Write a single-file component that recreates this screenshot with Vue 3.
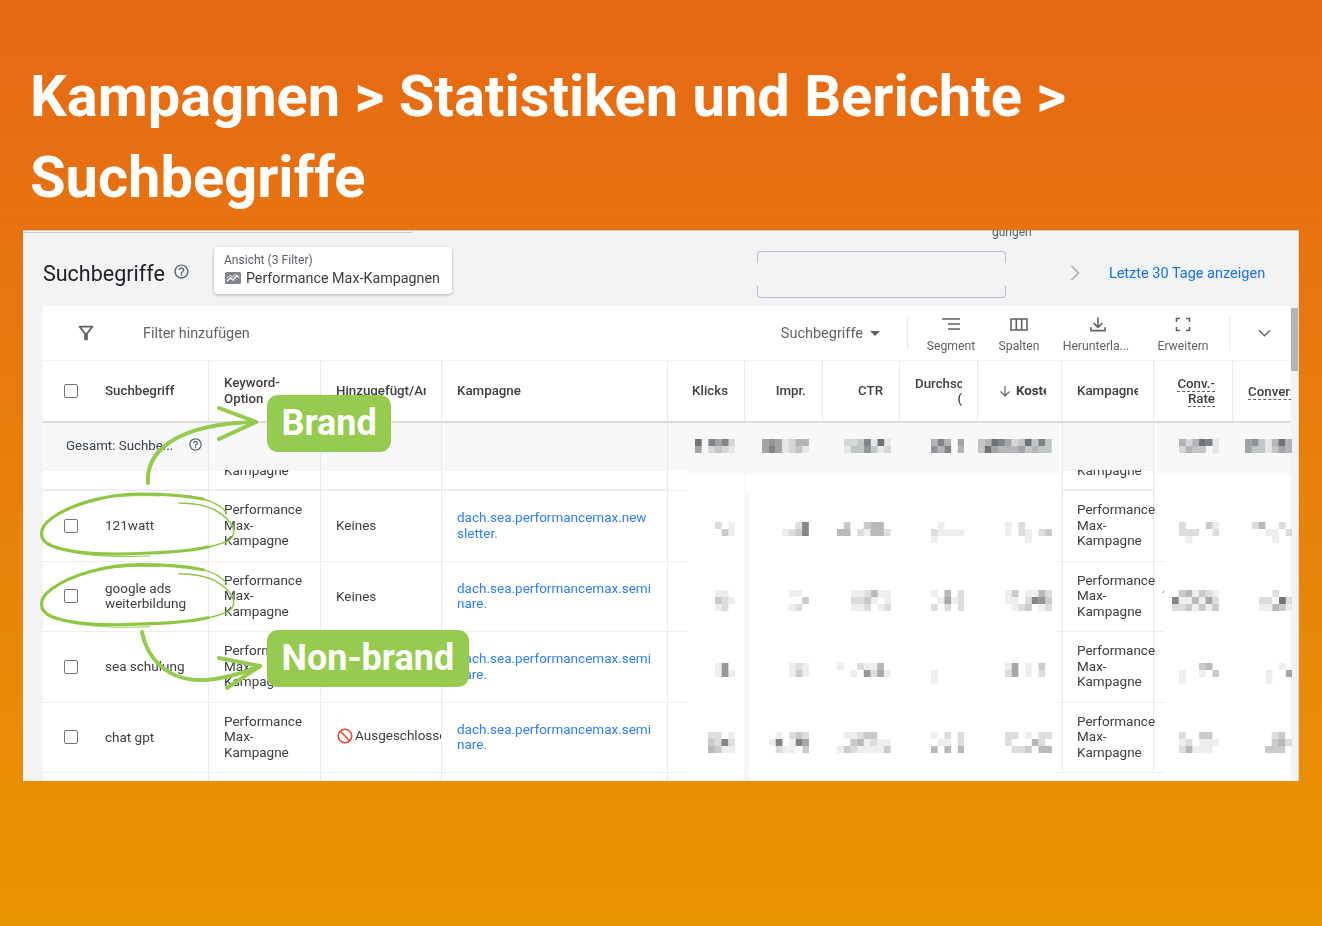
<script setup>
const helpPath = 'M11 18h2v-2h-2v2zm1-16C6.48 2 2 6.48 2 12s4.48 10 10 10 10-4.48 10-10S17.52 2 12 2zm0 18c-4.41 0-8-3.59-8-8s3.59-8 8-8 8 3.59 8 8-3.59 8-8 8zm0-14c-2.21 0-4 1.79-4 4h2c0-1.1.9-2 2-2s2 .9 2 2c0 2-3 1.75-3 5h2c0-2.25 3-2.5 3-5 0-2.21-1.79-4-4-4z'

// right offset of the blurred numbers in each metric column
const pads = [10, 14, 9, 14, 10, 14, -1]
const BLOCK = 6.7

const totals = [
  ['807572', '502321'],
  ['5651244', '5751231'],
  ['2237181', '1336312'],
  ['47405', '64704'],
  ['34875238373', '38544453433'],
  ['424871', '243301'],
  ['5631484', '5331354'],
]

const rows = [
  {
    term: '121watt', added: 'Keines', link: 'dach.sea.performancemax.newsletter.', top: 31,
    cells: [
      ['201', '031', '000'],
      ['0027', '1237', '0000'],
      ['03003440', '44021442', '00000000'],
      ['01000', '21111', '10000'],
      ['1020000', '1021023', '0001000'],
      ['200031', '222002', '010000'],
      ['240020', '001102', '000100'],
    ],
  },
  {
    term: 'google ads weiterbildung', added: 'Keines', link: 'dach.sea.performancemax.seminare.', top: 28,
    cells: [
      ['110', '321', '120'],
      ['0110', '0003', '0120'],
      ['112411', '223101', '112012'],
      ['10402', '01512', '20202'],
      ['1301142', '1102763', '0123012'],
      ['0341321', '7114152', '2231313'],
      ['00200', '22082', '11431'],
    ],
  },
  {
    term: 'sea schulung', added: 'Keines', link: 'dach.sea.performancemax.seminare.', top: 31,
    cells: [
      ['160', '161', '000'],
      ['121', '131', '000'],
      ['10021140', '00106251', '00000000'],
      ['00000', '10000', '10000'],
      ['1501030', '2501020', '0000000'],
      ['000340', '100103', '100000'],
      ['00010', '01005', '01000'],
    ],
  },
  {
    term: 'chat gpt', added: 'excluded', link: 'dach.sea.performancemax.seminare.', top: 29.5,
    cells: [
      ['2201', '3272', '4311'],
      ['010232', '170175', '021103'],
      ['01123300', '00341211', '13211113'],
      ['10202', '01102', '40404'],
      ['2201022', '2000420', '0223044'],
      ['200330', '120111', '241110'],
      ['0230', '0342', '3330'],
    ],
  },
]

// one svg rect per block of a blurred number
function blocks(lines) {
  const out = []
  lines.forEach((line, y) => {
    line.split('').forEach((d, x) => {
      if (d !== '0') out.push({ x: x * BLOCK, y: y * 7, o: Number(d) / 11 })
    })
  })
  return out
}
const mosaicWidth = (lines) => lines[0].length * BLOCK
</script>

<template>
  <div class="page">
    <h1 class="title">Kampagnen &gt; Statistiken und Berichte &gt; Suchbegriffe</h1>

    <div class="shot">
      <div class="content">
        <div class="remnant-line"></div>
        <div class="remnant-text">gungen</div>

        <div class="head">
          <span class="head-title">Suchbegriffe</span>
          <svg class="help" viewBox="0 0 24 24"><path :d="helpPath" /></svg>
          <div class="view-card">
            <div class="view-label">Ansicht (3 Filter)</div>
            <div class="view-name">
              <svg class="trend" viewBox="0 0 16 12">
                <rect width="16" height="12" rx="1.5" fill="#80868b" />
                <path d="M2 9l3.5-3 2.5 2 4-4.5 2 2" fill="none" stroke="#fff" stroke-width="1.4" />
                <path d="M2 6l3-2.500 2.500 1.500 3-3" fill="none" stroke="#fff" stroke-width=".8" />
              </svg>
              Performance Max-Kampagnen
            </div>
          </div>
          <div class="empty-box">
            <div class="empty-top"></div>
            <div class="empty-bottom"></div>
          </div>
          <svg class="next" viewBox="0 0 10 16"><path d="M1.500 1l7 7-7 7" fill="none" stroke="#a9adb1" stroke-width="1.500" /></svg>
          <a class="last-days">Letzte 30 Tage anzeigen</a>
        </div>

        <div class="table">
          <div class="toolbar">
            <svg class="filter-icon" viewBox="0 0 24 24"><path d="M7 6h10l-5.010 6.300L7 6zm-2.750-.390C6.270 8.200 10 13 10 13v6c0 .550.450 1 1 1h2c.550 0 1-.450 1-1v-6s3.730-4.800 5.750-7.39C20.260 4.950 19.790 4 18.950 4H5.040c-.830 0-1.300.950-.790 1.610z" /></svg>
            <span class="add-filter">Filter hinzufügen</span>
            <span class="level">Suchbegriffe<i class="caret"></i></span>
            <span class="sep sep-first"></span>
            <div class="tool tool-segment">
              <svg viewBox="0 0 20 14"><path d="M1 1.500h18M7 6.500h12M7 11.500h12" fill="none" stroke="#5f6368" stroke-width="1.700" /></svg>
              <span>Segment</span>
            </div>
            <div class="tool tool-columns">
              <svg viewBox="0 0 20 14"><path d="M2 1.500h16v11H2zM7.300 1.500v11M12.700 1.500v11" fill="none" stroke="#5f6368" stroke-width="1.600" /></svg>
              <span>Spalten</span>
            </div>
            <div class="tool tool-download">
              <svg viewBox="0 0 20 16"><path d="M10 .5v10M5.500 6.500l4.500 4.500 4.500-4.500M2.500 11v3.500h15V11" fill="none" stroke="#5f6368" stroke-width="1.700" /></svg>
              <span>Herunterla...</span>
            </div>
            <div class="tool tool-expand">
              <svg viewBox="0 0 20 14"><path d="M3.500 4.500V1h3.500M13 1h3.500v3.500M3.500 9.500V13h3.500M13 13h3.500V9.500" fill="none" stroke="#5f6368" stroke-width="1.600" /></svg>
              <span>Erweitern</span>
            </div>
            <span class="sep sep-last"></span>
            <svg class="collapse" viewBox="0 0 14 8"><path d="M1 1l6 6 6-6" fill="none" stroke="#5f6368" stroke-width="1.500" /></svg>
          </div>

          <div class="grid thead">
            <div class="th th-first"><span class="check"></span>Suchbegriff</div>
            <div class="th th-keyword"><div>Keyword-<br />Option</div></div>
            <div class="th"><span class="clip clip-added">Hinzugefügt/Anzeige</span></div>
            <div class="th">Kampagne</div>
            <div class="th num">Klicks</div>
            <div class="th num">Impr.</div>
            <div class="th num">CTR</div>
            <div class="th"><span class="clip clip-avg">Durchschn.<em>(</em></span></div>
            <div class="th th-sort">
              <svg viewBox="0 0 12 12"><path d="M6 1v10M1.500 6.500L6 11l4.500-4.500" fill="none" stroke="#5f6368" stroke-width="1.200" /></svg>
              <span class="clip clip-cost">Kosten</span>
            </div>
            <div class="th"><span class="clip clip-camp">Kampagnentyp</span></div>
            <div class="th num"><div><span class="dashed">Conv.-</span><br /><span class="dashed">Rate</span></div></div>
            <div class="th th-last"><span class="clip clip-conv"><span class="dashed">Conversions</span></span></div>
          </div>

          <div class="grid total">
            <div class="td td-total">
              Gesamt: Suchbe...
              <svg class="help help-small" viewBox="0 0 24 24"><path :d="helpPath" /></svg>
            </div>
            <div class="td"></div>
            <div class="td"></div>
            <div class="td"></div>
            <template v-for="(m, i) in totals" :key="i">
              <div v-if="i === 5" class="td td-camp"></div>
              <div class="metric metric-total">
                <svg :width="mosaicWidth(m)" height="14" :style="{ marginRight: pads[i] + 'px' }">
                  <rect v-for="(b, n) in blocks(m)" :key="n" :x="b.x" :y="b.y" :width="BLOCK" height="7" fill="#3c4043" :fill-opacity="b.o" />
                </svg>
              </div>
            </template>
          </div>

          <div class="grid partial">
            <div class="td"></div>
            <div class="td td-cut">Kampagne</div>
            <div class="td"></div>
            <div class="td"></div>
            <div class="metric metric-cut stub"></div>
            <div class="metric metric-cut"></div>
            <div class="metric metric-cut"></div>
            <div class="metric metric-cut"></div>
            <div class="metric metric-cut"></div>
            <div class="td td-camp td-cut">Kampagne</div>
            <div class="metric metric-cut"></div>
            <div class="metric metric-cut"></div>
          </div>

          <div v-for="row in rows" :key="row.term" class="grid row">
            <div class="td td-term">
              <span class="check"></span>
              <span class="term">{{ row.term }}</span>
            </div>
            <div class="td"><span class="pm">Performance Max-Kampagne</span></div>
            <div class="td td-added">
              <template v-if="row.added === 'excluded'">
                <svg class="no-sign" viewBox="0 0 16 16"><circle cx="8" cy="8" r="6.800" fill="none" stroke="#ea4335" stroke-width="1.500" /><path d="M3.300 3.300l9.400 9.400" stroke="#ea4335" stroke-width="1.500" /></svg>
                <span>Ausgeschlossen</span>
              </template>
              <template v-else>{{ row.added }}</template>
            </div>
            <div class="td"><a class="camp-link">{{ row.link }}</a></div>
            <template v-for="(m, i) in row.cells" :key="i">
              <div v-if="i === 5" class="td td-camp"><span class="pm">Performance Max-Kampagne</span></div>
              <div class="metric" :class="{ stub: i === 0 }" :style="{ paddingTop: row.top + 'px' }">
                <svg :width="mosaicWidth(m)" height="21" :style="{ marginRight: pads[i] + 'px' }">
                  <rect v-for="(b, n) in blocks(m)" :key="n" :x="b.x" :y="b.y" :width="BLOCK" height="7" fill="#3c4043" :fill-opacity="b.o" />
                </svg>
              </div>
            </template>
          </div>

          <div class="grid row">
            <div class="td"></div>
            <div class="td"></div>
            <div class="td"></div>
            <div class="td"></div>
            <div class="metric stub"></div>
          </div>
        </div>

        <div class="scrollbar"></div>
      </div>

      <!-- hand drawn marks, page coordinates -->
      <svg class="marks" viewBox="23 230 1276 551">
        <path d="M1162.500 593l1.500-2" stroke="#80868b" stroke-width="1" />
        <g v-for="dy in [0, 70.7]" :key="dy" :transform="`translate(0 ${dy})`" fill="none" stroke="#8fc744" stroke-linecap="round">
          <path d="M203 499C182 495 160 494 140 494C105 494 70 505 52 518C38 528 38 540 52 546C75 555 115 555 150 553C178 552 195 550 208 547" stroke-width="3.200" />
          <path d="M203 499C214 502 222 507 226 512" stroke-width="1.300" />
          <path d="M208 547C216 546 222 543 228 541C240 533 232 520 215 510C203 504 190 503 179 503" stroke-width="1.500" />
          <path d="M90 500C115 496 135 495 160 496" stroke-width=".9" />
          <path d="M76 553C100 557 125 557 150 556" stroke-width=".9" />
        </g>
        <g fill="none" stroke="#97cb4f" stroke-width="4" stroke-linecap="round" stroke-linejoin="round">
          <path d="M148 483C146 455 170 424 256 422" />
          <path d="M219 408L256 422L219 439" />
          <path d="M142 632C146 655 165 682 205 680C225 679 245 672 260 666" />
          <path d="M219 658L260 666L227 688" />
        </g>
      </svg>
      <div class="tag tag-brand">Brand</div>
      <div class="tag tag-non-brand">Non-brand</div>
    </div>
  </div>
</template>

<style>
html, body {
  margin: 0;
}
</style>

<style scoped>
.page {
  height: 926px;
  overflow: hidden;
  box-sizing: border-box;
  padding-top: 56px;
  background: linear-gradient(180deg, #e66815 0%, #e89600 100%);
  font-family: Roboto, "Liberation Sans", sans-serif;
}

.title {
  margin: 0 0 12px 30px;
  width: 1150px;
  font-size: 57.8px;
  line-height: 81px;
  font-weight: 700;
  color: #fff;
}

.shot {
  position: relative;
  width: 1276px;
  height: 551px;
  margin-left: 23px;
  overflow: hidden;
  background: #f1f3f4;
}

.content {
  height: 100%;
  filter: blur(0.45px);
  color: #3c4043;
  border-top: 1px solid #c9cccf;
  border-right: 1px solid #d8dadd;
  box-sizing: border-box;
}

.remnant-line {
  position: absolute;
  left: 0;
  top: 0;
  width: 389px;
  height: 1px;
  border-bottom: 1px solid #c9cccf;
  border-right: 1px solid #c9cccf;
  border-bottom-right-radius: 3px;
}

.remnant-text {
  position: absolute;
  left: 969px;
  top: -6px;
  font-size: 12px;
  line-height: 14px;
  color: #5f6368;
}

.head {
  display: flex;
  align-items: center;
  box-sizing: border-box;
  height: 75px;
  padding: 9px 0 0 20px;
}

.head-title {
  font-size: 21.5px;
  color: #202124;
}

.help {
  width: 17px;
  height: 17px;
  margin: -4px 0 0 8px;
  fill: #5f6368;
}

.view-card {
  box-sizing: border-box;
  width: 238px;
  height: 47px;
  margin: 0 0 6px 24px;
  padding: 6px 10px;
  background: #fff;
  border-radius: 4px;
  box-shadow: 0 1px 3px rgba(60, 64, 67, 0.4);
}

.view-label {
  font-size: 12.1px;
  line-height: 15px;
  color: #5f6368;
}

.view-name {
  display: flex;
  align-items: center;
  gap: 5px;
  margin-top: 2px;
  font-size: 14.3px;
  line-height: 17px;
  white-space: nowrap;
}

.trend {
  width: 16px;
  height: 12px;
  margin-left: 1px;
}

.empty-box {
  display: flex;
  flex-direction: column;
  justify-content: space-between;
  box-sizing: border-box;
  width: 249px;
  height: 47px;
  margin: 2px 0 0 305px;
}

.empty-top,
.empty-bottom {
  height: 11px;
  border: 1px solid #bdc1c6;
}

.empty-top {
  border-bottom: 0;
  border-radius: 4px 4px 0 0;
}

.empty-bottom {
  border-top: 0;
  border-radius: 0 0 4px 4px;
}

.next {
  width: 10px;
  height: 16px;
  margin-left: 64px;
}

.last-days {
  margin-left: 29px;
  font-size: 14.5px;
  color: #1a73e8;
  white-space: nowrap;
}

.table {
  width: 1248px;
  margin-left: 20px;
  background: #fff;
}

.toolbar {
  display: flex;
  align-items: center;
  height: 54px;
  font-size: 14.4px;
  color: #5f6368;
}

.filter-icon {
  width: 22px;
  height: 22px;
  margin-left: 32px;
  fill: #5f6368;
}

.add-filter {
  margin-left: 46px;
}

.level {
  display: flex;
  align-items: center;
  margin-left: 531px;
  font-size: 14.5px;
}

.caret {
  width: 0;
  height: 0;
  margin-left: 7px;
  border: 5px solid transparent;
  border-top-color: #5f6368;
  border-bottom: 0;
}

.sep {
  width: 1px;
  height: 33px;
  background: #e8eaed;
}

.sep-first {
  margin-left: 27px;
}

.sep-last {
  margin-left: 14px;
}

.tool {
  display: flex;
  flex-direction: column;
  align-items: center;
  gap: 7px;
  width: 64px;
  padding-top: 3px;
  font-size: 12.2px;
  line-height: 14px;
  white-space: nowrap;
}

.tool svg {
  width: 20px;
  height: 15px;
}

.tool-segment {
  margin-left: 11px;
}

.tool-columns {
  margin-left: 4px;
}

.tool-download {
  width: 78px;
  margin-left: 6px;
}

.tool-download svg {
  margin-left: 4px;
}

.tool-expand {
  margin-left: 16px;
}

.collapse {
  width: 13px;
  height: 8px;
  margin-left: 28px;
}

.grid {
  display: grid;
  grid-template-columns: 166px 112px 121px 226px 77px 78px 77px 78px 84px 92px 79px 58px;
}

.thead {
  height: 63px;
  border-top: 1px solid #f1f3f4;
  border-bottom: 2px solid #dadce0;
  box-sizing: border-box;
}

.th {
  display: flex;
  align-items: center;
  box-sizing: border-box;
  padding: 0 15px;
  font-size: 13.3px;
  line-height: 15.500px;
  font-weight: 500;
  color: #3c4043;
  border-right: 1px solid #e8eaed;
  overflow: hidden;
  white-space: nowrap;
}

.th.num {
  justify-content: flex-end;
  text-align: right;
  padding-right: 16px;
}

.th.num:nth-child(11) {
  padding-right: 17px;
}

.th-first {
  padding-left: 21px;
}

.th-first .check {
  margin-right: 27px;
}

.th-keyword {
  padding-bottom: 1px;
}

.th-sort {
  gap: 5px;
  padding: 0 15px 0 21px;
  font-weight: 700;
}

.th-sort svg {
  flex: none;
  width: 12px;
  height: 12px;
}

.th-last {
  border-right: 0;
  padding-right: 0;
}

.clip {
  display: block;
  overflow: hidden;
}

.clip-added {
  width: 90px;
}

.clip-avg {
  width: 47px;
}

.clip-avg em {
  display: block;
  font-style: normal;
  text-align: right;
}

.clip-cost {
  width: 31px;
}

.clip-camp {
  width: 62px;
}

.clip-conv {
  width: 43px;
  padding: 3px 0 2px;
}

.dashed {
  border-bottom: 1px dashed #5f6368;
}

.check {
  flex: none;
  display: inline-block;
  box-sizing: border-box;
  width: 14px;
  height: 14px;
  border: 1.7px solid #70757a;
  border-radius: 2px;
}

.total {
  height: 47px;
  background: #f7f8fa;
}

.td {
  display: flex;
  align-items: center;
  box-sizing: border-box;
  padding: 0 15px;
  font-size: 13.5px;
  line-height: 15.500px;
  border-right: 1px solid #e8eaed;
  border-bottom: 1px solid #eceef0;
}

.td-total {
  padding-left: 23px;
  font-size: 13.3px;
  white-space: nowrap;
}

.help-small {
  flex: none;
  width: 15px;
  height: 15px;
  margin: -4px 0 0 15px;
}

.td-camp {
  position: relative;
  padding-left: 14px;
  border-left: 1px solid #e8eaed;
}

.td-camp::after {
  content: "";
  position: absolute;
  left: -7px;
  right: -12px;
  bottom: -1px;
  height: 1px;
  background: #eceef0;
}

.total .td-camp::after {
  display: none;
}

.metric {
  position: relative;
  display: flex;
  justify-content: flex-end;
  align-items: flex-start;
}

.metric-total {
  padding-top: 16px;
}

.metric-cut {
  background: linear-gradient(#f7f8fa 4px, #fff 4px);
}

.stub::before {
  content: "";
  position: absolute;
  left: 0;
  top: 0;
  bottom: 0;
  width: 19px;
  background: #fff;
  border-bottom: 1px solid #eceef0;
}

.stub::after {
  content: "";
  position: absolute;
  right: -5px;
  top: 0;
  bottom: 0;
  width: 6px;
  background: #f7f8fa;
}

.partial {
  height: 21px;
  background: #fff;
}

.partial .td {
  border-bottom-width: 2px;
  overflow: hidden;
}

.td-cut {
  align-items: flex-end;
  padding-bottom: 11px;
}

.row {
  height: 70.5px;
  background: #fff;
}

.term {
  margin-left: 27px;
  width: 95px;
}

.td-term {
  padding-left: 21px;
}

.td-added {
  overflow: hidden;
  white-space: nowrap;
  padding-right: 0;
}

.no-sign {
  flex: none;
  width: 16px;
  height: 16px;
  margin: -2px 2px 0 1px;
}

.td-added span {
  margin-top: -4px;
}

.pm {
  width: 78px;
  margin-top: -1px;
}

.camp-link {
  width: 196px;
  color: #2f7fee;
  word-break: break-all;
}

.scrollbar {
  position: absolute;
  left: 1268px;
  top: 77px;
  width: 7px;
  height: 63px;
  background: #b3b5b7;
}

.marks {
  position: absolute;
  inset: 0;
  width: 1276px;
  height: 551px;
  pointer-events: none;
}

.tag {
  position: absolute;
  left: 244px;
  box-sizing: border-box;
  height: 57px;
  padding: 0 14.5px;
  background: #97cb4f;
  border-radius: 11px;
  font-size: 36px;
  line-height: 57px;
  font-weight: 700;
  color: #fff;
  white-space: nowrap;
}

.tag-brand {
  top: 165px;
}

.tag-non-brand {
  top: 400px;
}
</style>
